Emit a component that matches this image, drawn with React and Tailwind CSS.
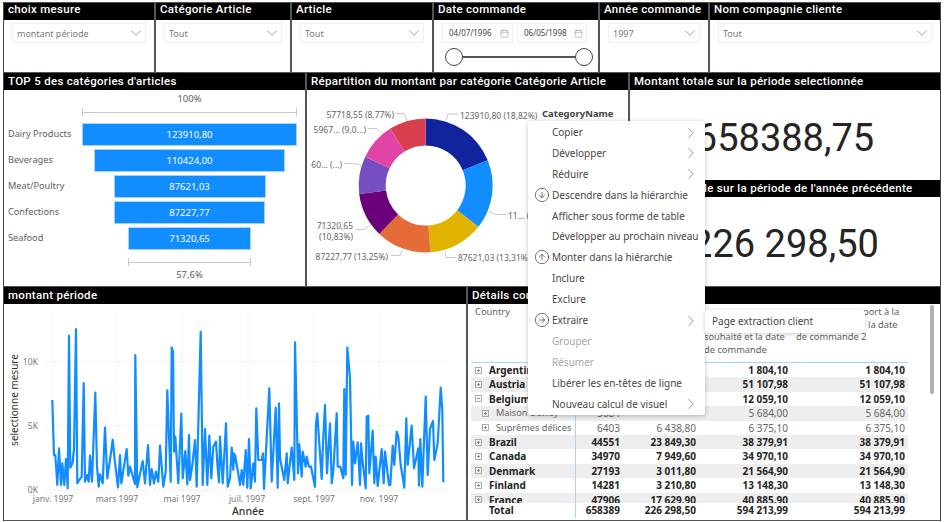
import React from "react";
import { ChevronDown, ChevronRight, Calendar, CircleArrowDown, CircleArrowUp, CircleArrowRight } from "lucide-react";

const A = [157,345,162,510,166,510,172,600,177,490,183,600,187,535,193,600,198,522,203,610,207,152,211,548,218,532,222,490,228,132,232,595,238,585,245,575,251,294,255,590,262,570,266,590,270,512,276,590,286,323,291,545,296,605,300,568,308,595,315,428,322,580,332,510,338,464,344,525,354,607,360,510,364,595,380,492,385,572,390,545,405,597,406,210,412,607,428,528,435,595,444,480,450,600,455,552,462,595,468,560,475,590,480,482,490,605,497,560,502,316,512,590,515,188,519,200,522,500,526,455,535,595,544,386,548,580,556,498,562,598,567,450,570,585,577,540,585,465,590,605,602,140,608,600,615,432,622,600,628,452,634,580,640,485,648,470,652,535,657,592,660,455,668,595,672,525,678,415,683,605,690,580,695,488,700,555,702,505,712,550];
const B = [0,510,8,555,15,600,20,555,25,600,32,495,37,608,42,462,47,610,55,535,60,590,64,370,70,525,80,525,84,505,87,612,103,310,110,590,122,368,128,608,132,355,135,520,148,585,155,505,158,595,170,488,178,585,180,172,189,565,193,478,200,575,203,500,212,545,215,515,222,545,228,545,240,605,243,415,247,385,260,582,264,475,270,360,276,565,285,415,290,595,295,558,305,385,308,545,316,545,325,580,328,312,332,570,337,188,345,280,351,600,355,470,360,535,368,472,375,600,378,475,382,520,392,610,395,395,400,392,403,565,413,437,418,595,422,515,428,603,440,492,446,595,450,500,462,600,466,600,473,482,478,540,485,440,490,455,497,540,508,608,514,400,518,540,530,422,537,550,550,490,552,602,556,462,562,605,572,335,578,570,585,432,594,408,598,525,608,475,617,308,622,375,625,592];
function linePts() {
  const out = [];
  for (let i = 0; i < A.length; i += 2) out.push(`${(A[i] / 3).toFixed(1)},${(285 + A[i + 1] / 3).toFixed(1)}`);
  for (let i = 0; i < B.length; i += 2) out.push(`${(235 + B[i] / 3).toFixed(1)},${(285 + B[i + 1] / 3).toFixed(1)}`);
  return out.join(" ");
}

const SLICES = [
  [18.82, "#12239E"], [16.77, "#118DFF"], [13.31, "#DFB300"], [13.25, "#E66C37"],
  [10.83, "#6B007B"], [9.1, "#744EC2"], [9.06, "#E044A7"], [8.86, "#D9404F"],
];
function slicePaths() {
  const cx = 425.7, cy = 186, R = 67, r = 40;
  let a = 0;
  return SLICES.map(([p, c]) => {
    const s = a, e = a + (p / 100) * Math.PI * 2;
    a = e;
    const pt = (rad, t) => `${(cx + rad * Math.sin(t)).toFixed(2)} ${(cy - rad * Math.cos(t)).toFixed(2)}`;
    const big = e - s > Math.PI ? 1 : 0;
    return { c, d: `M${pt(R, s)} A${R} ${R} 0 ${big} 1 ${pt(R, e)} L${pt(r, e)} A${r} ${r} 0 ${big} 0 ${pt(r, s)} Z` };
  });
}

function Head({ children, top }) {
  return (
    <div className={`h-[17px] shrink-0 bg-black text-white pl-[4px] font-['Roboto',sans-serif] font-medium text-[11.5px] tracking-[0.3px] whitespace-nowrap overflow-hidden ${top ? "leading-[13.5px]" : "leading-[16px]"}`}>
      {children}
    </div>
  );
}

function Drop({ label }) {
  return (
    <div className="h-[20px] border border-[#f0f0f0] flex items-center justify-between pl-[4px] text-[9px] text-[#7a7a7a]">
      <span className="pt-[1px]">{label}</span>
      <ChevronDown size={18} strokeWidth={0.8} className="text-[#666]" />
    </div>
  );
}

function Filter({ title, label, className }) {
  return (
    <div className={`bg-white flex flex-col ${className}`}>
      <Head top>{title}</Head>
      <div className="pt-[3px] px-[8px]"><Drop label={label} /></div>
    </div>
  );
}

function DateBox({ value, className }) {
  return (
    <div className={`h-[20px] border border-[#f0f0f0] flex items-center justify-between pl-[6px] pr-[3px] text-[8px] text-[#444] ${className}`}>
      <span>{value}</span>
      <Calendar size={9} strokeWidth={1} className="text-[#666]" />
    </div>
  );
}

const FUNNEL = [
  ["Dairy Products", "123910,80", "w-[215px]"],
  ["Beverages", "110424,00", "w-[191px]"],
  ["Meat/Poultry", "87621,03", "w-[152px]"],
  ["Confections", "87227,77", "w-[151px]"],
  ["Seafood", "71320,65", "w-[123px]"],
];

function Funnel() {
  return (
    <div className="flex-1 flex flex-col text-[#605e5c] text-[9.5px]">
      <div className="h-[16px] pl-[78px] w-[293px] text-center leading-[17px]">100%</div>
      <div className="ml-[78px] w-[215px] h-[8px] mt-[2px] border-x border-[#c8c8c8] flex items-center"><div className="w-full h-[1px] bg-[#c8c8c8]" /></div>
      <div className="mt-[7px] flex flex-col gap-[3px]">
        {FUNNEL.map(([n, v, w]) => (
          <div key={n} className="flex h-[23px]">
            <div className="w-[78px] pl-[4px] text-[9.2px] leading-[22px] whitespace-nowrap">{n}</div>
            <div className="w-[215px] flex justify-center">
              <div className={`${w} h-full bg-[#118dff] border border-[#a6d4ff] text-white text-[9.5px] text-center leading-[22px]`}>{v}</div>
            </div>
          </div>
        ))}
      </div>
      <div className="ml-[78px] w-[215px] flex justify-center mt-[8px]">
        <div className="w-[123px] h-[8px] border-x border-[#c8c8c8] flex items-center"><div className="w-full h-[1px] bg-[#c8c8c8]" /></div>
      </div>
      <div className="pl-[78px] w-[293px] text-center mt-[3px] leading-[12px]">57,6%</div>
    </div>
  );
}

function Donut() {
  const lab = { fill: "#666", fontSize: 8.5, fontFamily: "'Noto Sans',sans-serif" };
  const leaders = [
    "M446 121 L448 114.5 L458 114.5", "M407 121 L404 114 L396 114", "M382 134 L377 129 L368 129",
    "M361 166 L354 164 L344 164", "M371 225 L364 230 L356 230", "M402 250 L400 256 L391 256",
    "M445 252 L446 258 L456 258", "M489 212 L496 215 L506 215",
  ];
  return (
    <svg viewBox="307 91 321 195" className="w-full flex-1 block">
      {slicePaths().map((s) => <path key={s.c} d={s.d} fill={s.c} />)}
      {leaders.map((d) => <path key={d} d={d} fill="none" stroke="#bbb" strokeWidth="0.8" />)}
      <text x="394" y="118" textAnchor="end" {...lab}>57718,55 (8,77%)</text>
      <text x="366" y="133" textAnchor="end" {...lab}>5967... (9,0...)</text>
      <text x="342" y="168" textAnchor="end" {...lab}>60... (...)</text>
      <text x="353" y="229" textAnchor="end" {...lab}>71320,65</text>
      <text x="353" y="240" textAnchor="end" {...lab}>(10,83%)</text>
      <text x="388" y="260" textAnchor="end" {...lab}>87227,77 (13,25%)</text>
      <text x="458" y="261" {...lab}>87621,03 (13,31%)</text>
      <text x="508" y="219" {...lab}>11... (...)</text>
      <text x="460" y="119" {...lab}>123910,80 (18,82%)</text>
      <text x="542" y="117" fill="#444" fontSize="9.5" fontWeight="700" fontFamily="'Noto Sans',sans-serif">CategoryName</text>
    </svg>
  );
}

function LineChart() {
  const lab = { fill: "#777", fontSize: 8.6, fontFamily: "'Noto Sans',sans-serif" };
  const dash = { stroke: "#d8d8d8", strokeWidth: 1, strokeDasharray: "1 3" };
  return (
    <svg viewBox="4 304 462 216" className="w-full flex-1 block">
      {[362, 426, 490].map((y) => <line key={y} x1="46" x2="449" y1={y} y2={y} {...dash} />)}
      {[53, 117, 182, 248, 314, 379].map((x) => <line key={x} x1={x} x2={x} y1="313" y2="490" {...dash} />)}
      <polyline points={linePts()} fill="none" stroke="#118dff" strokeWidth="2.2" strokeLinejoin="round" />
      {[["10K", 365], ["5K", 429], ["0K", 493]].map(([t, y]) => <text key={t} x="38" y={y} textAnchor="end" {...lab}>{t}</text>)}
      {[["janv. 1997", 53], ["mars 1997", 117], ["mai 1997", 182], ["juil. 1997", 247], ["sept. 1997", 314], ["nov. 1997", 379]].map(([t, x]) => (
        <text key={t} x={x} y="501.5" textAnchor="middle" {...lab}>{t}</text>
      ))}
      <text x="248" y="515" textAnchor="middle" fill="#333" fontSize="10.5" fontWeight="500" fontFamily="'Noto Sans',sans-serif">Année</text>
      <text x="17.5" y="400" textAnchor="middle" transform="rotate(-90 17.5 400)" fill="#333" fontSize="10" fontFamily="'Noto Sans',sans-serif">selectionne mesure</text>
    </svg>
  );
}

function Exp({ minus, className }) {
  return (
    <svg viewBox="0 0 7 7" className={`w-[7px] h-[7px] shrink-0 ${className || ""}`}>
      <rect x="0.5" y="0.5" width="6" height="6" fill="none" stroke="#999" strokeWidth="0.8" />
      <path d={minus ? "M2 3.5H5" : "M2 3.5H5M3.5 2V5"} stroke="#777" strokeWidth="0.8" />
    </svg>
  );
}

const ROWS = [
  ["Argentina", "", "", "1 804,10", "1 804,10", 0],
  ["Austria", "", "", "51 107,98", "51 107,98", 0],
  ["Belgium", "", "", "12 059,10", "12 059,10", 2],
  ["Maison Dewey", "5684", "", "5 684,00", "5 684,00", 1],
  ["Suprêmes délices", "6403", "6 438,80", "6 375,10", "6 375,10", 1],
  ["Brazil", "44551", "23 849,30", "38 379,91", "38 379,91", 0],
  ["Canada", "34970", "7 949,60", "34 970,10", "34 970,10", 0],
  ["Denmark", "27193", "3 011,80", "21 564,90", "21 564,90", 0],
  ["Finland", "14281", "3 210,80", "13 148,30", "13 148,30", 0],
  ["France", "47906", "17 629,90", "40 885,90", "40 885,90", 0],
];

const GRID = "grid grid-cols-[104px_47px_76px_92px_118px] w-[437px] ml-[3px]";

function Table() {
  return (
    <div className="flex-1 relative text-[10px] font-['Noto_Sans',sans-serif]">
      <div className={`${GRID} h-[59px] border-b border-[#a6d4ff] text-[#605e5c] text-[9.3px] leading-[12.6px]`}>
        <div className="pl-[4px] pt-[2px]">Country</div>
        <div />
        <div />
        <div className="pt-[27px] pl-[6px] whitespace-nowrap">souhaité et la date<br />de commande</div>
        <div className="pt-[2px] pl-[6px] whitespace-nowrap">
          <div className="pl-[67px]">port à la</div>
          <div className="pl-[72px]">la date</div>
          <div>de commande 2</div>
        </div>
      </div>
      <div className="h-[140px] overflow-hidden">
        {ROWS.map(([n, a, b, c, d, k], i) => {
          const tone = k === 1 ? "text-[#666] font-normal" : "text-[#252423] font-bold";
          return (
            <div key={n} className={`${GRID} h-[14.4px] leading-[14.4px] ${tone} ${i % 2 === 1 ? "bg-[#eeeeee]" : ""}`}>
              <div className={`flex items-center gap-[7px] whitespace-nowrap overflow-hidden ${k === 1 ? "pl-[11px] text-[9.2px]" : "pl-[4px]"}`}>
                <Exp minus={k === 2} />
                <span>{n}</span>
              </div>
              <div className="text-right pr-[2px] border-l border-[#a6d4ff]">{a}</div>
              <div className="text-right pr-[2px]">{b}</div>
              <div className="text-right pr-[2px]">{c}</div>
              <div className="text-right pr-[3px]">{d}</div>
            </div>
          );
        })}
      </div>
      <div className={`${GRID} h-[15px] leading-[15px] font-bold text-[#252423]`}>
        <div className="pl-[18px]">Total</div>
        <div className="text-right pr-[2px] border-l border-[#a6d4ff]">658389</div>
        <div className="text-right pr-[2px]">226 298,50</div>
        <div className="text-right pr-[2px]">594 213,99</div>
        <div className="text-right pr-[3px]">594 213,99</div>
      </div>
      <div className="absolute right-[6px] top-[1px] w-[4px] h-[89px] rounded bg-[#b0b0b0]" />
    </div>
  );
}

const MENU = [
  ["Copier", null, true],
  ["Développer", null, true],
  ["Réduire", null, true],
  ["Descendre dans la hiérarchie", CircleArrowDown, false],
  ["Afficher sous forme de table", null, false],
  ["Développer au prochain niveau", null, false],
  ["Monter dans la hiérarchie", CircleArrowUp, false],
  ["Inclure", null, false],
  ["Exclure", null, false],
  ["Extraire", CircleArrowRight, true],
  ["Grouper", null, false, true],
  ["Résumer", null, false, true],
  ["Libérer les en-têtes de ligne", null, false],
  ["Nouveau calcul de visuel", null, true],
];

function Menu() {
  return (
    <>
      <div className="absolute left-[528px] top-[121px] w-[177px] h-[294px] bg-white rounded-[3px] shadow-[0_1px_5px_rgba(0,0,0,0.25)] py-[1px] text-[10px] font-['Noto_Sans',sans-serif] z-10">
        {MENU.map(([t, Icon, sub, off]) => (
          <div key={t} className={`relative h-[20.9px] leading-[20.9px] pl-[24px] whitespace-nowrap ${off ? "text-[#a8a8a8]" : "text-[#484644]"}`}>
            {Icon && <Icon size={16} strokeWidth={1} className="absolute left-[6px] top-[2px] text-[#333]" />}
            {t}
            {sub && <ChevronRight size={18} strokeWidth={0.9} className="absolute right-[5px] top-[1.5px] text-[#666]" />}
          </div>
        ))}
      </div>
      <div className="absolute left-[705px] top-[310px] w-[160px] h-[23px] bg-white rounded-[3px] shadow-[0_1px_4px_rgba(0,0,0,0.2)] pl-[7px] leading-[23px] text-[10px] text-[#484644] font-['Noto_Sans',sans-serif] z-10">
        Page extraction client
      </div>
    </>
  );
}

export default function App() {
  return (
    <div className="relative w-[945px] h-[522px] bg-white overflow-hidden font-['Noto_Sans',sans-serif]">
      <div className="ml-[3px] mt-[2px] w-[938px] h-[519px] bg-[#555555] border-x border-dotted border-x-[#333] py-[1px] flex flex-col gap-[1px]">
        <div className="h-[69px] flex gap-[2px]">
          <Filter title="choix mesure" label="montant période" className="w-[150px]" />
          <Filter title="Catégorie Article" label="Tout" className="w-[134px]" />
          <Filter title="Article" label="Tout" className="w-[140px]" />
          <div className="w-[164px] bg-white flex flex-col">
            <Head top>Date commande</Head>
            <div className="pt-[3px] pl-[8px] flex gap-[4px]">
              <DateBox value="04/07/1996" className="w-[71px]" />
              <DateBox value="06/05/1998" className="w-[70px]" />
            </div>
            <div className="flex items-center pl-[11px] mt-[5px] w-[159px]">
              <div className="w-[18px] h-[18px] rounded-full border border-[#444] shrink-0" />
              <div className="flex-1 h-[1.5px] bg-[#555]" />
              <div className="w-[18px] h-[18px] rounded-full border border-[#444] shrink-0" />
            </div>
          </div>
          <Filter title="Année commande" label="1997" className="w-[108px]" />
          <Filter title="Nom compagnie cliente" label="Tout" className="flex-1" />
        </div>
        <div className="h-[213px] flex gap-[2px]">
          <div className="w-[301px] bg-white flex flex-col overflow-hidden">
            <Head>TOP 5 des catégories d'articles</Head>
            <Funnel />
          </div>
          <div className="w-[321px] bg-white flex flex-col">
            <Head>Répartition du montant par catégorie Catégorie Article</Head>
            <Donut />
          </div>
          <div className="flex-1 bg-white flex flex-col">
            <Head>Montant totale sur la période selectionnée</Head>
            <div className="h-[90px] pt-[6px] flex items-center justify-center font-['Roboto',sans-serif] text-[38px] text-[#252423]">658388,75</div>
            <Head>Montant totale sur la période de l'année précédente</Head>
            <div className="flex-1 pt-[6px] flex items-center justify-center font-['Roboto',sans-serif] text-[38px] text-[#252423]">226 298,50</div>
          </div>
        </div>
        <div className="flex-1 flex gap-[2px]">
          <div className="w-[462px] bg-white flex flex-col">
            <Head>montant période</Head>
            <LineChart />
          </div>
          <div className="flex-1 bg-white flex flex-col">
            <Head>Détails commandes par pays et client</Head>
            <Table />
          </div>
        </div>
      </div>
      <Menu />
    </div>
  );
}
